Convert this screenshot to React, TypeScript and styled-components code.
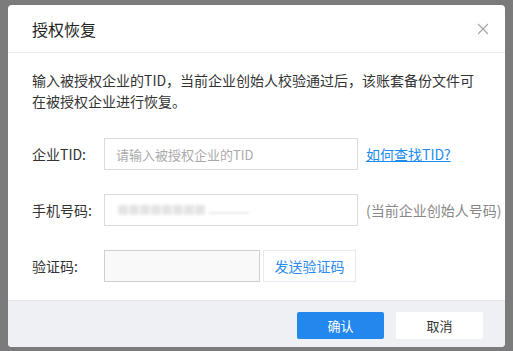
import styled, { createGlobalStyle } from "styled-components";

const GlobalStyle = createGlobalStyle`
  html, body {
    margin: 0;
    padding: 0;
    width: 513px;
    height: 351px;
    overflow: hidden;
  }
  body {
    font-family: "Noto Sans CJK SC", "Noto Sans", sans-serif;
    color: #333;
  }
`;

const App = () => {
  return (
    <>
      <GlobalStyle />
      <Backdrop>
        <Dialog>
          <Header>
            <Title>授权恢复</Title>
            <Close aria-label="close">
              <svg width="12" height="12" viewBox="0 0 12 12">
                <path d="M1 1 L11 11 M11 1 L1 11" stroke="#a3a3a3" strokeWidth="1.1" />
              </svg>
            </Close>
          </Header>
          <Body>
            <Intro>
              输入被授权企业的TID，当前企业创始人校验通过后，该账套备份文件可在被授权企业进行恢复。
            </Intro>
            <Form>
              <Row>
                <Label>企业TID:</Label>
                <Input placeholder="请输入被授权企业的TID" />
                <Link href="#">如何查找TID?</Link>
              </Row>
              <Row>
                <Label>手机号码:</Label>
                <FakeInput>
                  <Blurred>■■■■■■■■</Blurred>
                  <Underscore />
                </FakeInput>
                <Hint>(当前企业创始人号码)</Hint>
              </Row>
              <Row>
                <Label>验证码:</Label>
                <CodeInput />
                <SendButton>发送验证码</SendButton>
              </Row>
            </Form>
          </Body>
          <Footer>
            <Button $primary>确认</Button>
            <Button>取消</Button>
          </Footer>
        </Dialog>
      </Backdrop>
    </>
  );
};

export default App;

const Backdrop = styled.div`
  width: 513px;
  height: 351px;
  box-sizing: border-box;
  background: #7b7b7b;
  padding: 5px 8px 4px 8px;
`;

const Dialog = styled.div`
  width: 497px;
  height: 342px;
  background: #fff;
  border-radius: 4px;
  overflow: hidden;
  display: flex;
  flex-direction: column;
`;

const Header = styled.div`
  height: 48px;
  box-sizing: border-box;
  flex: none;
  border-bottom: 1px solid #e8ebef;
  display: flex;
  align-items: center;
  justify-content: space-between;
  padding: 0 16px 0 24px;
`;

const Title = styled.div`
  font-size: 16px;
  color: #222;
  margin-top: 1px;
`;

const Close = styled.button`
  border: 0;
  background: none;
  padding: 0;
  width: 12px;
  height: 12px;
  display: flex;
  margin-top: 1px;
`;

const Body = styled.div`
  flex: 1;
  padding: 17px 24px 0 24px;
`;

const Intro = styled.p`
  margin: 0;
  font-size: 14px;
  line-height: 21px;
  color: #333;
  width: 452px;
`;

const Form = styled.div`
  margin-top: 26px;
  display: flex;
  flex-direction: column;
  gap: 24px;
`;

const Row = styled.div`
  display: flex;
  align-items: center;
  height: 32px;
  & > * {
    flex: none;
  }
`;

const Label = styled.div`
  width: 72px;
  font-size: 14px;
  color: #333;
`;

const Input = styled.input`
  width: 254px;
  height: 32px;
  box-sizing: border-box;
  border: 1px solid #dcdcdc;
  outline: none;
  padding: 0 11px;
  font-family: inherit;
  font-size: 13px;
  color: #333;
  &::placeholder {
    color: #aaa;
  }
`;

const FakeInput = styled.div`
  width: 254px;
  height: 32px;
  box-sizing: border-box;
  border: 1px solid #dcdcdc;
  padding: 0 12px;
  display: flex;
  align-items: center;
  overflow: hidden;
`;

const Blurred = styled.span`
  font-size: 12px;
  line-height: 12px;
  color: #e4e4e4;
  letter-spacing: -1px;
  filter: blur(1.5px);
`;

const Underscore = styled.span`
  width: 40px;
  height: 2px;
  margin-left: 4px;
  margin-top: 6px;
  background: #eaeaea;
  filter: blur(1px);
`;

const Link = styled.a`
  margin-left: 8px;
  font-size: 14px;
  color: #1a8cf0;
  text-decoration: underline;
  white-space: nowrap;
`;

const Hint = styled.span`
  margin-left: 8px;
  font-size: 14px;
  color: #888;
  white-space: nowrap;
`;

const CodeInput = styled.input`
  width: 156px;
  height: 32px;
  box-sizing: border-box;
  border: 1px solid #cfcfcf;
  background: #f9f9f9;
  outline: none;
`;

const SendButton = styled.button`
  margin-left: 3px;
  width: 93px;
  height: 32px;
  box-sizing: border-box;
  border: 1px solid #e6ebf1;
  background: #fff;
  font-family: inherit;
  font-size: 14px;
  color: #2b8cf0;
  padding: 0;
`;

const Footer = styled.div`
  height: 47px;
  box-sizing: border-box;
  flex: none;
  border-top: 1px solid #e3e5ea;
  background: #eff0f4;
  display: flex;
  justify-content: flex-end;
  align-items: flex-start;
  gap: 12px;
  padding: 11px 22px 0 0;
`;

const Button = styled.button<{ $primary?: boolean }>`
  width: 87px;
  height: 27px;
  border: 0;
  border-radius: 2px;
  font-family: inherit;
  font-size: 13px;
  background: ${(p) => (p.$primary ? "#2388ee" : "#fff")};
  color: ${(p) => (p.$primary ? "#fff" : "#333")};
`;
